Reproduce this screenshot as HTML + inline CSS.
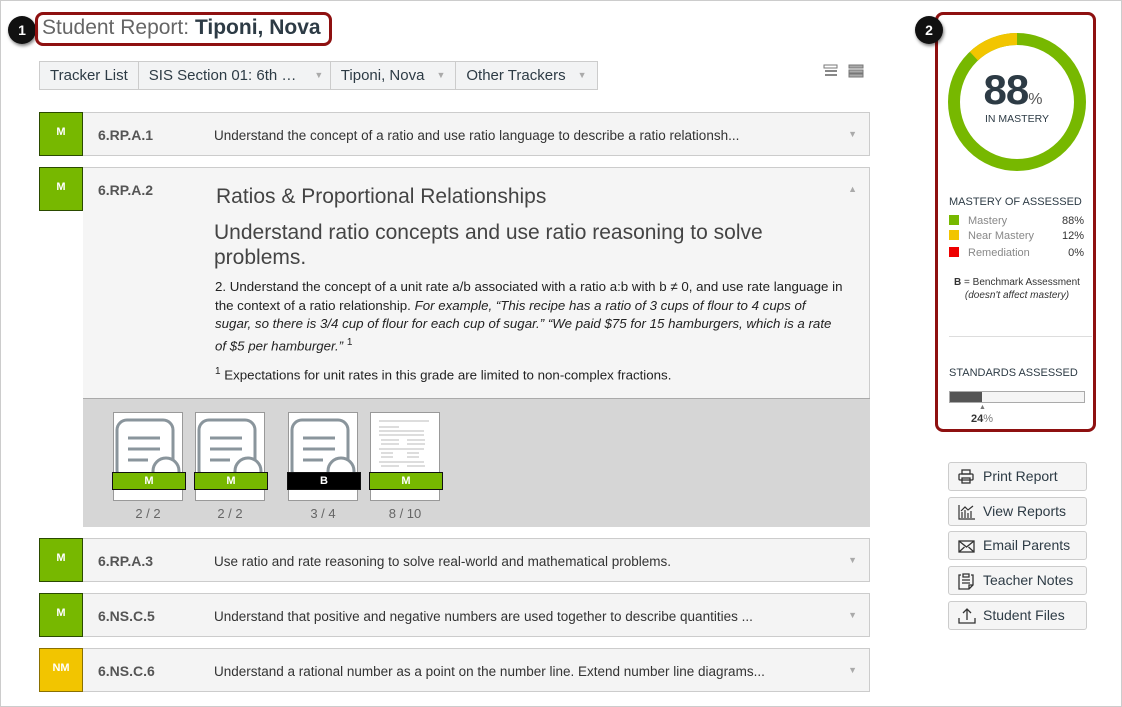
<!DOCTYPE html>
<html><head><meta charset="utf-8"><style>
*{box-sizing:border-box;margin:0;padding:0}
body{width:1122px;height:707px;background:#fff;font-family:"Liberation Sans",sans-serif;position:relative;overflow:hidden}
.frame{position:absolute;left:0;top:0;width:1122px;height:707px;border:1px solid #ccc;pointer-events:none}
.abs{position:absolute}
.callout{position:absolute;width:28px;height:28px;border-radius:50%;background:#111;color:#fff;font-weight:bold;font-size:14px;display:flex;align-items:center;justify-content:center;box-shadow:1px 2px 3px rgba(0,0,0,.5)}
.title{left:35px;top:12px;width:297px;height:34px;border:3px solid #8e1010;border-radius:8px;font-size:21px;color:#666;padding:1px 0 0 4px;white-space:nowrap}
.title b{color:#2d3b45}
.nav{left:39px;top:61px;height:29px;display:flex;border:1px solid #ccc;background:#f2f3f4}
.nav div{border-right:1px solid #ccc;padding:0 10px;font-size:15px;color:#2d3b45;line-height:27px;white-space:nowrap}
.nav div:last-child{border:none}
.car{color:#aaa;font-size:9px;margin-left:12px;vertical-align:2px}
.badge{position:absolute;left:39px;width:44px;height:44px;background:#77b800;border:1px solid #2a4a00;color:#fff;font-weight:bold;font-size:11px;text-align:center;padding-top:13px}
.row{position:absolute;left:83px;width:787px;background:#f4f4f4;border:1px solid #ccc;border-left:none}
.code{position:absolute;left:15px;top:14px;font-weight:bold;font-size:14px;color:#555}
.desc{position:absolute;left:131px;top:15px;font-size:13.5px;color:#333;white-space:nowrap}
.tri{position:absolute;right:12px;top:16px;color:#aaa;font-size:9px}
.thumb{position:absolute;top:13px;width:70px;height:89px;background:#fff;border:1px solid #999}
.lbl{position:absolute;left:-2px;top:59px;width:74px;height:18px;background:#77b800;border:1px solid #111;color:#fff;font-weight:bold;font-size:11px;text-align:center;line-height:16px}
.cnt{position:absolute;top:107px;width:70px;text-align:center;font-size:13px;color:#666}
.btn{position:absolute;left:948px;width:139px;height:29px;border:1px solid #ccc;border-radius:3px;background:#f5f5f5;font-size:14px;color:#2d3b45;line-height:27px;padding-left:34px}
.btn svg{position:absolute;left:9px;top:6px}
.leg{position:absolute;left:949px;font-size:11px;color:#888;width:135px}
.leg i{display:inline-block;width:10px;height:10px;vertical-align:-1px;margin-right:9px}
.leg b{position:absolute;right:0;color:#333;font-weight:normal}
</style></head><body>
<div class="callout" style="left:8px;top:16px">1</div>
<div class="abs title">Student Report: <b>Tiponi, Nova</b></div>
<div class="abs nav"><div>Tracker List</div><div style="width:192px">SIS Section 01: 6th …<span class="car" style="margin-left:18px">▼</span></div><div>Tiponi, Nova<span class="car">▼</span></div><div>Other Trackers<span class="car">▼</span></div></div>
<svg class="abs" style="left:823px;top:64px" width="42" height="14"><rect x="1" y="1" width="13" height="3" fill="#fff" stroke="#777"/><rect x="2" y="6" width="12" height="2" fill="#888"/><rect x="2" y="10" width="12" height="2" fill="#888"/><rect x="26" y="1" width="14" height="3" fill="#aaa" stroke="#777"/><rect x="26" y="6" width="14" height="3" fill="#aaa" stroke="#777"/><rect x="26" y="10" width="14" height="3" fill="#aaa" stroke="#777"/></svg>

<div class="badge" style="top:112px">M</div>
<div class="row" style="top:112px;height:44px"><span class="code">6.RP.A.1</span><span class="desc">Understand the concept of a ratio and use ratio language to describe a ratio relationsh...</span><span class="tri">▼</span></div>

<div class="badge" style="top:167px">M</div>
<div class="row" style="top:167px;height:359px;background:#f5f5f5">
<span class="code">6.RP.A.2</span><span class="tri">▲</span>
<div class="abs" style="left:133px;top:17px;font-size:21px;color:#444">Ratios &amp; Proportional Relationships</div>
<div class="abs" style="left:131px;top:52px;width:600px;font-size:21px;color:#444;line-height:25px">Understand ratio concepts and use ratio reasoning to solve problems.</div>
<div class="abs" style="left:132px;top:110px;width:630px;font-size:13.3px;color:#222;line-height:18.5px">2. Understand the concept of a unit rate a/b associated with a ratio a:b with b ≠ 0, and use rate language in the context of a ratio relationship. <i>For example, “This recipe has a ratio of 3 cups of flour to 4 cups of sugar, so there is 3/4 cup of flour for each cup of sugar.” “We paid $75 for 15 hamburgers, which is a rate of $5 per hamburger.”</i> <sup style="font-size:10px">1</sup></div>
<div class="abs" style="left:132px;top:198px;font-size:13.3px;color:#222"><sup style="font-size:10px">1</sup> Expectations for unit rates in this grade are limited to non-complex fractions.</div>
<div class="abs" style="left:0;top:230px;width:787px;height:129px;background:#d6d6d6;border-top:1px solid #aaa">
<div class="thumb" style="left:30px"><svg width="70" height="60"><rect x="3" y="7" width="56" height="60" rx="10" fill="none" stroke="#8a959c" stroke-width="3"/><path d="M14 25h32M14 36h32M14 47h20" stroke="#8a959c" stroke-width="3"/><circle cx="52" cy="58" r="13" fill="#fff" stroke="#8a959c" stroke-width="3"/></svg><div class="lbl">M</div></div>
<div class="thumb" style="left:112px"><svg width="70" height="60"><rect x="3" y="7" width="56" height="60" rx="10" fill="none" stroke="#8a959c" stroke-width="3"/><path d="M14 25h32M14 36h32M14 47h20" stroke="#8a959c" stroke-width="3"/><circle cx="52" cy="58" r="13" fill="#fff" stroke="#8a959c" stroke-width="3"/></svg><div class="lbl">M</div></div>
<div class="thumb" style="left:205px"><svg width="70" height="60"><rect x="3" y="7" width="56" height="60" rx="10" fill="none" stroke="#8a959c" stroke-width="3"/><path d="M14 25h32M14 36h32M14 47h20" stroke="#8a959c" stroke-width="3"/><circle cx="52" cy="58" r="13" fill="#fff" stroke="#8a959c" stroke-width="3"/></svg><div class="lbl" style="background:#000">B</div></div>
<div class="thumb" style="left:287px"><svg width="70" height="60"><g stroke="#bbb" stroke-width="1"><path d="M8 8h50M8 14h20M8 18h45M8 22h45M10 27h18M36 27h18M10 31h18M36 31h18M8 36h45M10 40h12M36 40h12M10 44h12M36 44h12M8 49h45M10 53h18M36 53h18"/></g></svg><div class="lbl">M</div></div>
<div class="cnt" style="left:30px">2 / 2</div><div class="cnt" style="left:112px">2 / 2</div><div class="cnt" style="left:205px">3 / 4</div><div class="cnt" style="left:287px">8 / 10</div>
</div></div>

<div class="badge" style="top:538px">M</div>
<div class="row" style="top:538px;height:44px"><span class="code">6.RP.A.3</span><span class="desc">Use ratio and rate reasoning to solve real-world and mathematical problems.</span><span class="tri">▼</span></div>
<div class="badge" style="top:593px">M</div>
<div class="row" style="top:593px;height:44px"><span class="code">6.NS.C.5</span><span class="desc">Understand that positive and negative numbers are used together to describe quantities ...</span><span class="tri">▼</span></div>
<div class="badge" style="top:648px;background:#f2c500;border-color:#8a7000">NM</div>
<div class="row" style="top:648px;height:44px"><span class="code">6.NS.C.6</span><span class="desc">Understand a rational number as a point on the number line. Extend number line diagrams...</span><span class="tri">▼</span></div>

<div class="abs" style="left:935px;top:12px;width:161px;height:420px;border:3px solid #8e1010;border-radius:8px"></div>
<div class="callout" style="left:915px;top:16px">2</div>
<svg class="abs" style="left:947px;top:32px" width="140" height="140"><circle cx="70" cy="70" r="63" fill="none" stroke="#77b800" stroke-width="12"/><circle cx="70" cy="70" r="63" fill="none" stroke="#f2c500" stroke-width="12" stroke-dasharray="47.5 400" transform="rotate(-133.2 70 70)"/></svg>
<div class="abs" style="left:943px;top:66px;width:140px;text-align:center;font-size:42px;font-weight:bold;color:#2d3b45;letter-spacing:-1px">88<span style="font-size:16px;font-weight:normal;color:#555;letter-spacing:0">%</span></div>
<div class="abs" style="left:947px;top:113px;width:140px;text-align:center;font-size:10.5px;color:#2d3b45">IN MASTERY</div>
<div class="abs" style="left:949px;top:196px;font-size:11px;color:#2d3b45">MASTERY OF ASSESSED</div>
<div class="leg" style="top:215px"><i style="background:#77b800"></i>Mastery<b>88%</b></div>
<div class="leg" style="top:230px"><i style="background:#f2c500"></i>Near Mastery<b>12%</b></div>
<div class="leg" style="top:247px"><i style="background:#e00"></i>Remediation<b>0%</b></div>
<div class="abs" style="left:938px;top:276px;width:158px;text-align:center;font-size:10px;color:#333;line-height:13px"><b>B</b> = Benchmark Assessment<br><i>(doesn't affect mastery)</i></div>
<div class="abs" style="left:949px;top:336px;width:143px;border-top:1px solid #ddd"></div>
<div class="abs" style="left:949px;top:367px;font-size:11px;color:#2d3b45">STANDARDS ASSESSED</div>
<div class="abs" style="left:949px;top:391px;width:136px;height:12px;border:1px solid #aaa;background:#f5f5f5"><div style="width:32px;height:10px;background:#555"></div></div>
<div class="abs" style="left:979px;top:404px;font-size:7px;color:#777">▲</div>
<div class="abs" style="left:971px;top:413px;font-size:11px;font-weight:bold;color:#333">24<span style="font-weight:normal;color:#777">%</span></div>

<div class="btn" style="top:462px"><svg width="16" height="16" fill="none" stroke="#333" stroke-width="1.3"><rect x="4" y="1" width="8" height="4"/><rect x="1" y="5" width="14" height="6" rx="1"/><rect x="4" y="9" width="8" height="5"/></svg>Print Report</div>
<div class="btn" style="top:497px"><svg width="18" height="16" fill="none" stroke="#333" stroke-width="1.2"><path d="M1 1v14h16M4 14V8M7 14V6M10 14V9M13 14V7M3 7l4-4 3 3 5-4"/></svg>View Reports</div>
<div class="btn" style="top:531px"><svg width="17" height="16" fill="none" stroke="#333" stroke-width="1.3"><rect x="1" y="3" width="15" height="11"/><path d="M1 3l7.5 6 7.5-6M1 14l5.5-5M16 14l-5.5-5"/></svg>Email Parents</div>
<div class="btn" style="top:566px"><svg width="16" height="17" fill="none" stroke="#333" stroke-width="1.3"><path d="M3 2H1v14h10l4-4V2h-2M5 1h6v3H5zM4 7h8M4 10h8M11 16v-4h4"/></svg>Teacher Notes</div>
<div class="btn" style="top:601px"><svg width="18" height="16" fill="none" stroke="#333" stroke-width="1.3"><path d="M9 12V1M5 5l4-4 4 4M1 10v5h16v-5"/></svg>Student Files</div>
<div class="frame"></div>
</body></html>
